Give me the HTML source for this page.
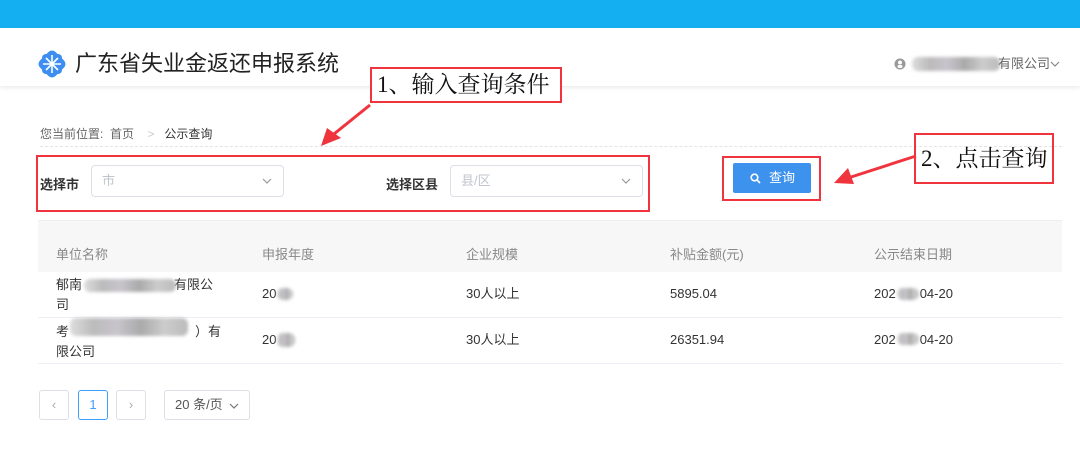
<!DOCTYPE html>
<html><head><meta charset="utf-8"><style>
*{margin:0;padding:0;box-sizing:border-box}
body{width:1080px;height:459px;background:#fff;font-family:"Liberation Sans","Noto Sans CJK SC",sans-serif;position:relative;overflow:hidden;color:#333}
.a{position:absolute}
.blur{position:absolute;background:linear-gradient(90deg,#ddd,#bbb,#c8c4cc,#aaa,#ccc,#bbb);filter:blur(1.5px);border-radius:6px}
.red{position:absolute;border:2px solid #f0343d}
.sel{position:absolute;border:1px solid #dcdfe6;border-radius:4px;height:32px;font-size:13px;color:#c0c4cc;padding:7px 10px;line-height:16px}
.th{font-size:13px;color:#888;line-height:16px}
.td{font-size:13px;color:#333;line-height:16px}
.pg{position:absolute;border:1px solid #dcdfe6;border-radius:3px;height:30px;font-size:13px;color:#aaa;text-align:center;line-height:28px}
</style></head><body>
<div class="a" style="left:0;top:0;width:1080px;height:28px;background:#14aff0"></div>
<div class="a" style="left:0;top:28px;width:1080px;height:58px;background:#fff;box-shadow:0 2px 4px rgba(0,0,0,0.08)"></div>
<svg class="a" style="left:38px;top:50px" width="28" height="28" viewBox="0 0 28 28"><g fill="#3d8ef0"><rect x="3" y="3" width="22" height="22" rx="5" transform="rotate(45 14 14)"/><rect x="4" y="4" width="20" height="20" rx="4"/></g><g stroke="#fff" stroke-width="1.6"><line x1="14" y1="5" x2="14" y2="23"/><line x1="5" y1="14" x2="23" y2="14"/><line x1="8" y1="8" x2="20" y2="20"/><line x1="20" y1="8" x2="8" y2="20"/></g></svg>
<div class="a" style="left:75px;top:49px;font-size:22px;color:#222;line-height:30px">广东省失业金返还申报系统</div>
<svg class="a" style="left:894px;top:58px" width="12" height="12"><circle cx="6" cy="6" r="5.5" fill="#999"/><circle cx="6" cy="4.5" r="2" fill="#fff"/><rect x="3.5" y="7" width="5" height="3" rx="1.5" fill="#fff"/></svg>
<div class="blur" style="left:912px;top:57px;width:88px;height:14px"></div>
<div class="a" style="left:998px;top:56px;font-size:13px;color:#666;line-height:16px">有限公司</div>
<svg class="a" style="left:1050px;top:60px" width="10" height="8"><polyline points="1,2 5,6 9,2" fill="none" stroke="#888" stroke-width="1.2"/></svg>

<div class="red" style="left:370px;top:67px;width:192px;height:36px;background:#fff"></div>
<div class="a" style="left:377px;top:70px;font-family:'Liberation Serif','Noto Serif CJK SC',serif;font-size:23px;color:#111;line-height:30px">1、输入查询条件</div>
<svg class="a" style="left:315px;top:100px" width="60" height="50"><line x1="55" y1="5" x2="14" y2="38" stroke="#f0343d" stroke-width="3"/><polygon points="6,46 12,28 26,38" fill="#f0343d"/></svg>

<div class="a" style="left:40px;top:125px;font-size:12px;color:#666">您当前位置:&nbsp; 首页 &nbsp;&nbsp; <span style="color:#ccc">&gt;</span> &nbsp;&nbsp;<span style="color:#333">公示查询</span></div>
<div class="a" style="left:40px;top:146px;width:1022px;border-top:1px dashed #e4e4e4"></div>

<div class="red" style="left:36px;top:155px;width:614px;height:57px"></div>
<div class="a" style="left:40px;top:174px;font-size:13px;color:#333;font-weight:bold">选择市</div>
<div class="sel" style="left:91px;top:165px;width:193px">市</div>
<svg class="a" style="left:262px;top:177px" width="10" height="8"><polyline points="1,2 5,6 9,2" fill="none" stroke="#999" stroke-width="1.2"/></svg>
<div class="a" style="left:386px;top:174px;font-size:13px;color:#333;font-weight:bold">选择区县</div>
<div class="sel" style="left:450px;top:165px;width:193px">县/区</div>
<svg class="a" style="left:621px;top:177px" width="10" height="8"><polyline points="1,2 5,6 9,2" fill="none" stroke="#999" stroke-width="1.2"/></svg>

<div class="red" style="left:722px;top:156px;width:99px;height:45px"></div>
<div class="a" style="left:733px;top:163px;width:78px;height:30px;background:#3c92ec;border-radius:2px;color:#fff;font-size:13px;line-height:30px;padding-left:36px">查询</div>
<svg class="a" style="left:750px;top:173px" width="11" height="11"><circle cx="4.5" cy="4.5" r="3.3" fill="none" stroke="#fff" stroke-width="1.6"/><line x1="7" y1="7" x2="10" y2="10" stroke="#fff" stroke-width="1.8"/></svg>
<svg class="a" style="left:828px;top:150px" width="92" height="40"><line x1="88" y1="6" x2="20" y2="28" stroke="#f0343d" stroke-width="3"/><polygon points="6,33 20,18 26,34" fill="#f0343d"/></svg>
<div class="red" style="left:914px;top:133px;width:140px;height:51px"></div>
<div class="a" style="left:921px;top:144px;font-family:'Liberation Serif','Noto Serif CJK SC',serif;font-size:23px;color:#111;line-height:30px">2、点击查询</div>

<div class="a" style="left:38px;top:220px;width:1024px;height:52px;background:#f7f7f7;border-top:1px solid #eee"></div>
<div class="a th" style="left:56px;top:247px">单位名称</div>
<div class="a th" style="left:262px;top:247px">申报年度</div>
<div class="a th" style="left:466px;top:247px">企业规模</div>
<div class="a th" style="left:670px;top:247px">补贴金额(元)</div>
<div class="a th" style="left:874px;top:247px">公示结束日期</div>

<div class="a td" style="left:56px;top:275px;line-height:20px">郁南<span style="display:inline-block;width:92px"></span>有限公<br>司</div>
<div class="blur" style="left:84px;top:279px;width:92px;height:13px"></div>
<div class="a td" style="left:262px;top:286px">20</div><div class="blur" style="left:277px;top:288px;width:16px;height:12px"></div>
<div class="a td" style="left:466px;top:286px">30人以上</div>
<div class="a td" style="left:670px;top:286px">5895.04</div>
<div class="a td" style="left:874px;top:286px">202<span style="display:inline-block;width:24px"></span>04-20</div><div class="blur" style="left:897px;top:288px;width:22px;height:12px"></div>
<div class="a" style="left:38px;top:317px;width:1024px;border-top:1px solid #ebeef5"></div>

<div class="a td" style="left:56px;top:322px;line-height:20px">考<span style="display:inline-block;width:126px"></span>）有<br>限公司</div>
<div class="blur" style="left:70px;top:318px;width:118px;height:18px"></div>
<div class="a td" style="left:262px;top:332px">20</div><div class="blur" style="left:277px;top:333px;width:18px;height:14px"></div>
<div class="a td" style="left:466px;top:332px">30人以上</div>
<div class="a td" style="left:670px;top:332px">26351.94</div>
<div class="a td" style="left:874px;top:332px">202<span style="display:inline-block;width:24px"></span>04-20</div><div class="blur" style="left:897px;top:333px;width:22px;height:12px"></div>
<div class="a" style="left:38px;top:363px;width:1024px;border-top:1px solid #ebeef5"></div>

<div class="pg" style="left:39px;top:390px;width:30px">‹</div>
<div class="pg" style="left:78px;top:390px;width:30px;border-color:#409eff;color:#409eff">1</div>
<div class="pg" style="left:116px;top:390px;width:30px">›</div>
<div class="pg" style="left:164px;top:390px;width:86px;color:#555;text-align:left;padding-left:10px">20 条/页</div>
<svg class="a" style="left:229px;top:402px" width="10" height="8"><polyline points="1,2 5,6 9,2" fill="none" stroke="#777" stroke-width="1.2"/></svg>
</body></html>
